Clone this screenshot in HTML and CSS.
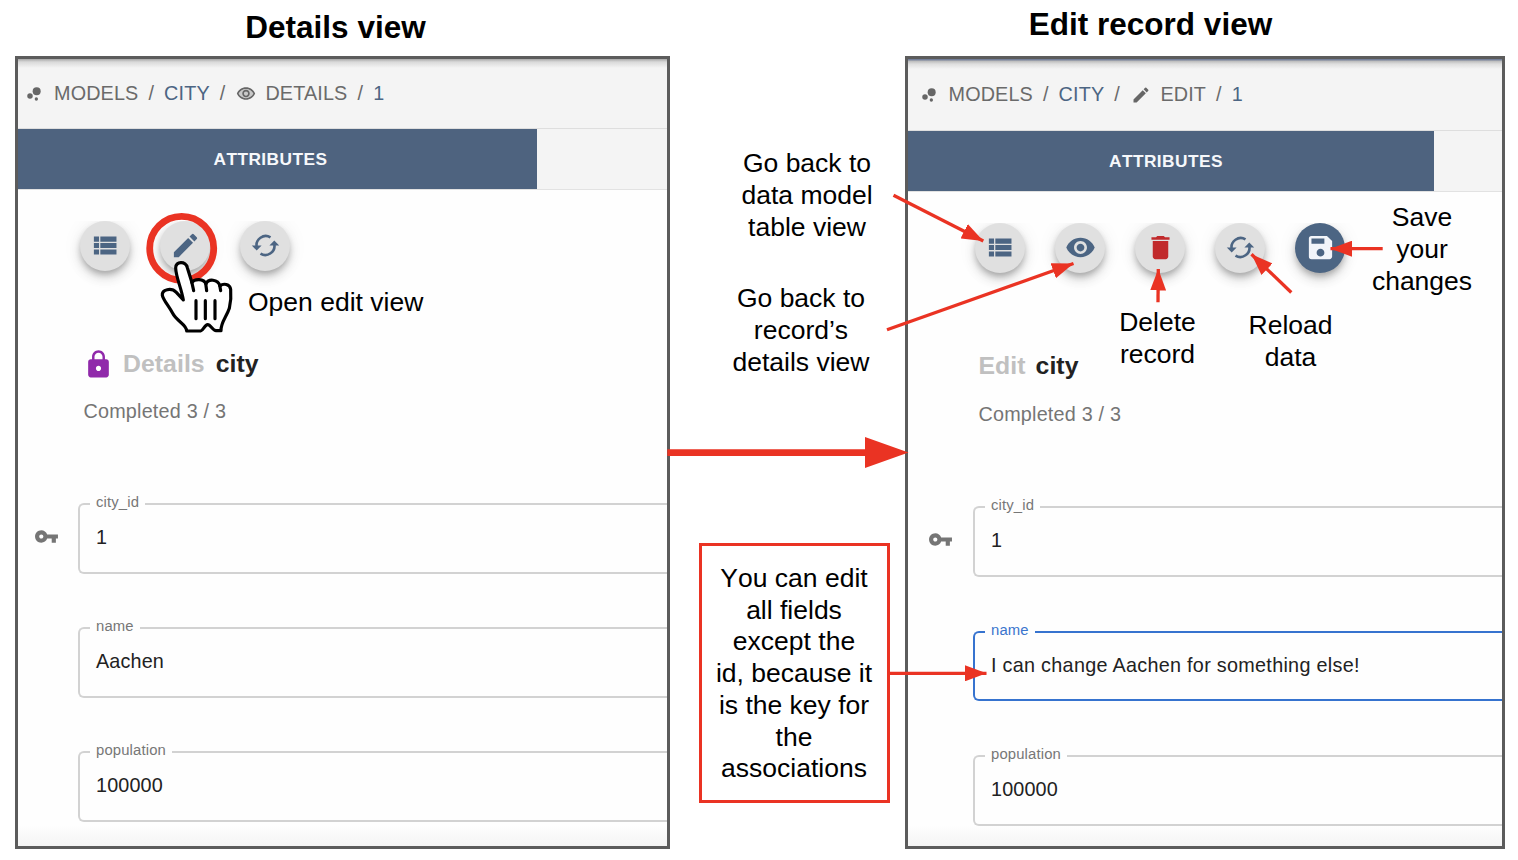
FILE: index.html
```html
<!DOCTYPE html>
<html lang="en">
<head>
<meta charset="utf-8">
<title>Details and edit record views</title>
<link rel="stylesheet" href="styles.css">
</head>
<body>
<svg class="defs" width="0" height="0" aria-hidden="true">
  <symbol id="i-bubble" viewBox="0 0 24 24"><circle cx="7.2" cy="14.4" r="3.3"/><circle cx="14.8" cy="18" r="2"/><circle cx="15.2" cy="8.8" r="4.8"/></symbol>
  <symbol id="i-eye2" viewBox="0 0 24 24"><path opacity=".3" d="M12 6c-3.79 0-7.17 2.13-8.82 5.5C4.83 14.87 8.21 17 12 17s7.17-2.13 8.82-5.5C19.17 8.13 15.79 6 12 6z"/><path d="M12 4C7 4 2.73 7.11 1 11.5 2.73 15.89 7 19 12 19s9.27-3.11 11-7.5C21.27 7.11 17 4 12 4zm0 13c-3.79 0-7.17-2.13-8.82-5.5C4.83 8.13 8.21 6 12 6s7.17 2.13 8.82 5.5C19.17 14.87 15.79 17 12 17zm0-10c-2.48 0-4.5 2.02-4.5 4.5S9.52 16 12 16s4.5-2.02 4.5-4.5S14.48 7 12 7zm0 7c-1.38 0-2.5-1.12-2.5-2.5S10.62 9 12 9s2.500 1.120 2.500 2.500S13.380 14 12 14z"/></symbol>
  <symbol id="i-pencil" viewBox="0 0 24 24"><path d="M3 17.250V21h3.750L17.810 9.940l-3.750-3.750L3 17.250zM20.710 7.040c.39-.39.39-1.020 0-1.410l-2.340-2.340a.996.996 0 0 0-1.410 0l-1.830 1.830 3.750 3.750 1.830-1.830z"/></symbol>
  <symbol id="i-list" viewBox="0 0 24 24"><path d="M3 14h4v-4H3v4zm0 5h4v-4H3v4zM3 9h4V5H3v4zm5 5h12.500v-4H8v4zm0 5h12.500v-4H8v4zM8 5v4h12.500V5H8z"/></symbol>
  <symbol id="i-eye" viewBox="0 0 24 24"><path d="M12 4.500C7 4.500 2.730 7.610 1 12c1.730 4.390 6 7.500 11 7.500s9.270-3.110 11-7.500c-1.730-4.390-6-7.500-11-7.500zM12 17c-2.760 0-5-2.240-5-5s2.240-5 5-5 5 2.240 5 5-2.240 5-5 5zm0-8c-1.660 0-3 1.340-3 3s1.340 3 3 3 3-1.340 3-3-1.340-3-3-3z"/></symbol>
  <symbol id="i-trash" viewBox="0 0 24 24"><path d="M6 19c0 1.100.9 2 2 2h8c1.100 0 2-.9 2-2V7H6v12zM19 4h-3.500l-1-1h-5l-1 1H5v2h14V4z"/></symbol>
  <symbol id="i-sync" viewBox="0 0 31 31"><path fill="none" stroke="currentColor" stroke-width="2.600" d="M6.700 17A9.200 9.200 0 0 1 20.500 7.400M24.300 14A9.200 9.200 0 0 1 10.500 23.600"/><path d="M1.800 15.600h9.800L6.700 20.600zM19.400 15.400h9.800L24.300 10.400z"/></symbol>
  <symbol id="i-save" viewBox="0 0 24 24"><path d="M17 3H5a2 2 0 0 0-2 2v14a2 2 0 0 0 2 2h14c1.100 0 2-.9 2-2V7l-4-4zm-5 16c-1.660 0-3-1.340-3-3s1.340-3 3-3 3 1.340 3 3-1.340 3-3 3zm3-10H5V5h10v4z"/></symbol>
  <symbol id="i-lock" viewBox="0 0 24 24"><path d="M18 8h-1V6c0-2.760-2.240-5-5-5S7 3.240 7 6v2H6c-1.100 0-2 .9-2 2v10c0 1.100.9 2 2 2h12c1.100 0 2-.9 2-2V10c0-1.100-.9-2-2-2zm-6 9c-1.100 0-2-.9-2-2s.9-2 2-2 2 .9 2 2-.9 2-2 2zm3.100-9H8.900V6c0-1.710 1.390-3.100 3.100-3.100s3.100 1.390 3.100 3.100v2z"/></symbol>
  <symbol id="i-key" viewBox="0 0 24 24"><path d="M12.650 10C11.830 7.670 9.610 6 7 6c-3.310 0-6 2.690-6 6s2.690 6 6 6c2.610 0 4.830-1.670 5.650-4H17v4h4v-4h2v-4H12.650zM7 14c-1.100 0-2-.9-2-2s.9-2 2-2 2 .9 2 2-.9 2-2 2z"/></symbol>
</svg>

<main class="board">
  <section class="view">
    <h1 class="view-title">Details view</h1>
    <div class="panel">
      <nav class="crumbs">
        <svg class="crumb-icon"><use href="#i-bubble"/></svg>
        <span class="first">MODELS</span><i>/</i><span class="link">CITY</span><i>/</i>
        <svg class="crumb-icon"><use href="#i-eye2"/></svg>
        <span class="after-icon">DETAILS</span><i>/</i><span class="link">1</span>
      </nav>
      <div class="tabs"><div class="tab">ATTRIBUTES</div></div>
      <div class="actions">
        <span class="fab"><svg><use href="#i-list"/></svg></span>
        <span class="fab"><svg><use href="#i-pencil"/></svg></span>
        <span class="fab"><svg><use href="#i-sync"/></svg></span>
      </div>
      <h2 class="record"><svg class="lock"><use href="#i-lock"/></svg><span class="mode">Details</span><span>city</span></h2>
      <p class="progress">Completed 3 / 3</p>
      <div class="fields">
        <div class="row"><svg class="key"><use href="#i-key"/></svg><fieldset class="field"><legend>city_id</legend>1</fieldset></div>
        <div class="row"><fieldset class="field"><legend>name</legend>Aachen</fieldset></div>
        <div class="row"><fieldset class="field"><legend>population</legend>100000</fieldset></div>
      </div>
    </div>
  </section>

  <aside class="notes">
    <p class="note note-table">Go back to<br>data model<br>table view</p>
    <p class="note note-details">Go back to<br>record’s<br>details view</p>
    <p class="note note-box">You can edit<br>all fields<br>except the<br>id, because it<br>is the key for<br>the<br>associations</p>
  </aside>

  <section class="view">
    <h1 class="view-title raised">Edit record view</h1>
    <div class="panel edit">
      <nav class="crumbs">
        <svg class="crumb-icon"><use href="#i-bubble"/></svg>
        <span class="first">MODELS</span><i>/</i><span class="link">CITY</span><i>/</i>
        <svg class="crumb-icon tight"><use href="#i-pencil"/></svg>
        <span class="after-icon">EDIT</span><i>/</i><span class="link">1</span>
      </nav>
      <div class="tabs"><div class="tab">ATTRIBUTES</div></div>
      <div class="actions">
        <span class="fab"><svg><use href="#i-list"/></svg></span>
        <span class="fab"><svg><use href="#i-eye"/></svg></span>
        <span class="fab danger"><svg><use href="#i-trash"/></svg></span>
        <span class="fab"><svg><use href="#i-sync"/></svg></span>
        <span class="fab primary"><svg><use href="#i-save"/></svg></span>
      </div>
      <h2 class="record"><span class="mode">Edit</span><span>city</span></h2>
      <p class="progress">Completed 3 / 3</p>
      <div class="fields">
        <div class="row"><svg class="key"><use href="#i-key"/></svg><fieldset class="field"><legend>city_id</legend>1</fieldset></div>
        <div class="row"><fieldset class="field focused"><legend>name</legend>I can change Aachen for something else!</fieldset></div>
        <div class="row"><fieldset class="field"><legend>population</legend>100000</fieldset></div>
      </div>
    </div>
  </section>

  <p class="note over over-open">Open edit view</p>
  <p class="note over over-delete">Delete<br>record</p>
  <p class="note over over-reload">Reload<br>data</p>
  <p class="note over over-save">Save<br>your<br>changes</p>

  <svg class="overlay" viewBox="0 0 1518 860" width="1518" height="860">
    <defs>
      <marker id="head" markerUnits="userSpaceOnUse" markerWidth="22" markerHeight="16" refX="21.500" refY="8" orient="auto"><path d="M0 0L21.500 8L0 16z" fill="#ea3323"/></marker>
    </defs>
    <circle cx="181.700" cy="248.300" r="32" fill="none" stroke="#ea3323" stroke-width="6.800"/>
    <g class="hand" transform="translate(60 200) scale(.33333)">
      <path fill="#fff" d="M370 300L349 277C334 262 305 268 307 286C311 302 325 316 338 340C350 364 380 373 380 393L422 393C430 392 434 374 443 374C452 374 458 392 468 392L483 392C482 368 500 350 508 325C514 300 513 280 512 268C510 252 490 249 480 258C474 237 444 235 438 252C432 234 402 236 396 248L382 203C378 182 346 183 347 204C348 232 364 264 370 300z"/>
      <path d="M395 245L401 272M437 250L440 272M479 256L482 272M408 302V356M436 302V356M465 302V356"/>
    </g>
    <g fill="none" stroke="#ea3323" stroke-width="3.300" marker-end="url(#head)">
      <path class="arrow" d="M893.500 195.300L983.300 241"/>
      <path class="arrow" d="M887 329.700L1073.500 263.500"/>
      <path class="arrow" d="M1158 302.300L1158.300 269"/>
      <path class="arrow" d="M1291.300 292.500L1251.500 254.300"/>
      <path class="arrow" d="M1382.700 248.700H1330.500"/>
      <path class="arrow" d="M889 673.300H986.500"/>
    </g>
    <path d="M667.300 449.200H865V437L908.500 452.500L865 468V455.900H667.300z" fill="#ea3323"/>
  </svg>
</main>
</body>
</html>
```

FILE: styles.css
```css
* { box-sizing: border-box; }
body {
  margin: 0;
  background: #fff;
  font-family: "Liberation Sans", Arial, sans-serif;
  color: #000;
}
h1, h2, p { margin: 0; }
svg { fill: currentColor; display: block; flex: none; }
.defs { position: absolute; }

.board {
  position: relative;
  width: 1518px;
  height: 860px;
  overflow: hidden;
  display: grid;
  grid-template-columns: 655px 235px 600px;
  padding-left: 15px;
}

.view { display: flex; flex-direction: column; min-width: 0; }
.view-title {
  height: 56px;
  padding-top: 9px;
  padding-right: 14px;
  font-size: 31.5px;
  line-height: 36px;
  text-align: center;
}
.view-title.raised { padding-top: 6px; padding-right: 109px; }

.panel {
  height: 793px;
  border: 3px solid #5c5c5c;
  overflow: hidden;
  background: linear-gradient(#fefefe 0 766px, #f3f3f3 790px);
}
.crumbs {
  display: flex;
  align-items: center;
  height: 70px;
  padding-left: 6px;
  background: linear-gradient(#a8a8a8, #d9d9d9 3px, #f4f4f4 9px);
  border-bottom: 1px solid #dedede;
  font-size: 19.8px;
  letter-spacing: .15px;
  color: #6a6a6a;
}
.crumbs i { font-style: normal; margin: 0 10px; }
.crumbs .link { color: #4c6583; }
.crumbs .first { margin-left: 10px; }
.crumbs .after-icon { margin-left: 9px; }
.crumb-icon { width: 20px; height: 20px; color: #666; }
.crumb-icon ~ .crumb-icon { margin-left: 1px; }
.tabs {
  height: 61px;
  background: #f4f4f4;
  border-bottom: 1px solid #e2e2e2;
}
.tab {
  width: 519px;
  height: 60px;
  background: #4e637f;
  color: #f6f8fb;
  font-size: 17.3px;
  font-weight: bold;
  letter-spacing: .45px;
  line-height: 60px;
  padding-left: 195.500px;
  font-kerning: none;
}
.actions {
  display: flex;
  gap: 30px;
  margin: 31px 0 0 42px;
  padding: 0 20px 24px;
  overflow: hidden;
}
.fab {
  display: grid;
  place-items: center;
  width: 50px;
  height: 50px;
  margin-top: -.5px;
  border-radius: 50%;
  background: #e0e0e0;
  color: #4c6583;
  box-shadow: 0 4px 6px -1px rgba(0,0,0,.24), 0 7px 12px rgba(0,0,0,.13), 0 1px 20px rgba(0,0,0,.07);
}
.fab svg { width: 31px; height: 31px; margin-top: -1px; }
.fab.danger { color: #c12a2c; }
.fab.primary { background: #4c6583; color: #f2f5fa; }

.record {
  display: flex;
  align-items: center;
  height: 34px;
  margin: 52.500px 0 0 65px;
  font-size: 24.8px;
  letter-spacing: .05px;
  color: #222;
}
.record .mode { color: #c0c0c0; margin-right: 11px; }
.lock { width: 31px; height: 31px; margin-right: 9px; color: #9029aa; }
.progress {
  margin: 17.500px 0 0 65.500px;
  font-size: 19.8px;
  line-height: 24px;
  letter-spacing: .2px;
  color: #757575;
}
.fields { margin-top: 73.500px; display: grid; row-gap: 46.500px; }
.row { display: flex; justify-content: flex-end; height: 77.500px; width: 649px; }
.key { width: 25px; height: 25px; margin: 27.500px auto 0 16px; color: #757575; }
.field {
  width: 589px;
  margin: 0;
  padding: 5px 0 0 10px;
  border: solid #d2d2d2;
  border-width: 2px 0 2px 2px;
  border-radius: 6px 0 0 6px;
  font-size: 19.8px;
  line-height: 40px;
  letter-spacing: .15px;
  color: #222;
  text-indent: 6px;
}
.field legend {
  height: 16px;
  padding: 0 6px 2px;
  font-size: 14.85px;
  line-height: 13px;
  letter-spacing: .15px;
  text-indent: 0;
  color: #777;
}
.field.focused { border-color: #3673cf; border-width: 2.500px 0 2.500px 2.500px; letter-spacing: .29px; }
.field.focused legend { color: #3b75cd; }

/* edit panel */
.edit .crumbs { height: 72px; padding-left: 10.500px; background: linear-gradient(#75809a 0 1px, #bbb 2px, #dedede 5px, #f4f4f4 10px); }
.edit .crumb-icon.tight { margin-left: 1.500px; }
.edit .tab { width: 526px; padding-left: 201px; }
.edit .actions { margin-left: 47px; }
.edit .record { margin-left: 70.500px; }
.edit .mode { margin-right: 10px; }
.edit .progress { margin-left: 70.500px; margin-top: 18.500px; }
.edit .fields { margin-top: 73.500px; row-gap: 47px; }
.edit .row { width: 594px; }
.edit .key { margin-left: 20px; }
.edit .field { width: 529px; }

/* annotations */
.notes { display: flex; flex-direction: column; align-items: flex-start; padding-top: 147px; }
.note { font-size: 26.5px; line-height: 32px; text-align: center; white-space: nowrap; font-kerning: none; }
.note-table { width: 160px; margin-left: 57px; }
.note-details { width: 160px; margin: 39px 0 0 51px; }
.note-box {
  width: 191px;
  height: 260px;
  margin: 165px 0 0 28.500px;
  padding-top: 17px;
  border: 3px solid #ea3323;
  line-height: 31.700px;
}
.over { position: absolute; }
.over-open { left: 248px; top: 286px; }
.over-delete { left: 1107.500px; top: 306px; width: 100px; }
.over-reload { left: 1240.500px; top: 309px; width: 100px; }
.over-save { left: 1362px; top: 201px; width: 120px; }
.overlay { position: absolute; left: 0; top: 0; }
.hand path { stroke: #000; stroke-width: 9.500px; stroke-linejoin: round; stroke-linecap: round; }
```
